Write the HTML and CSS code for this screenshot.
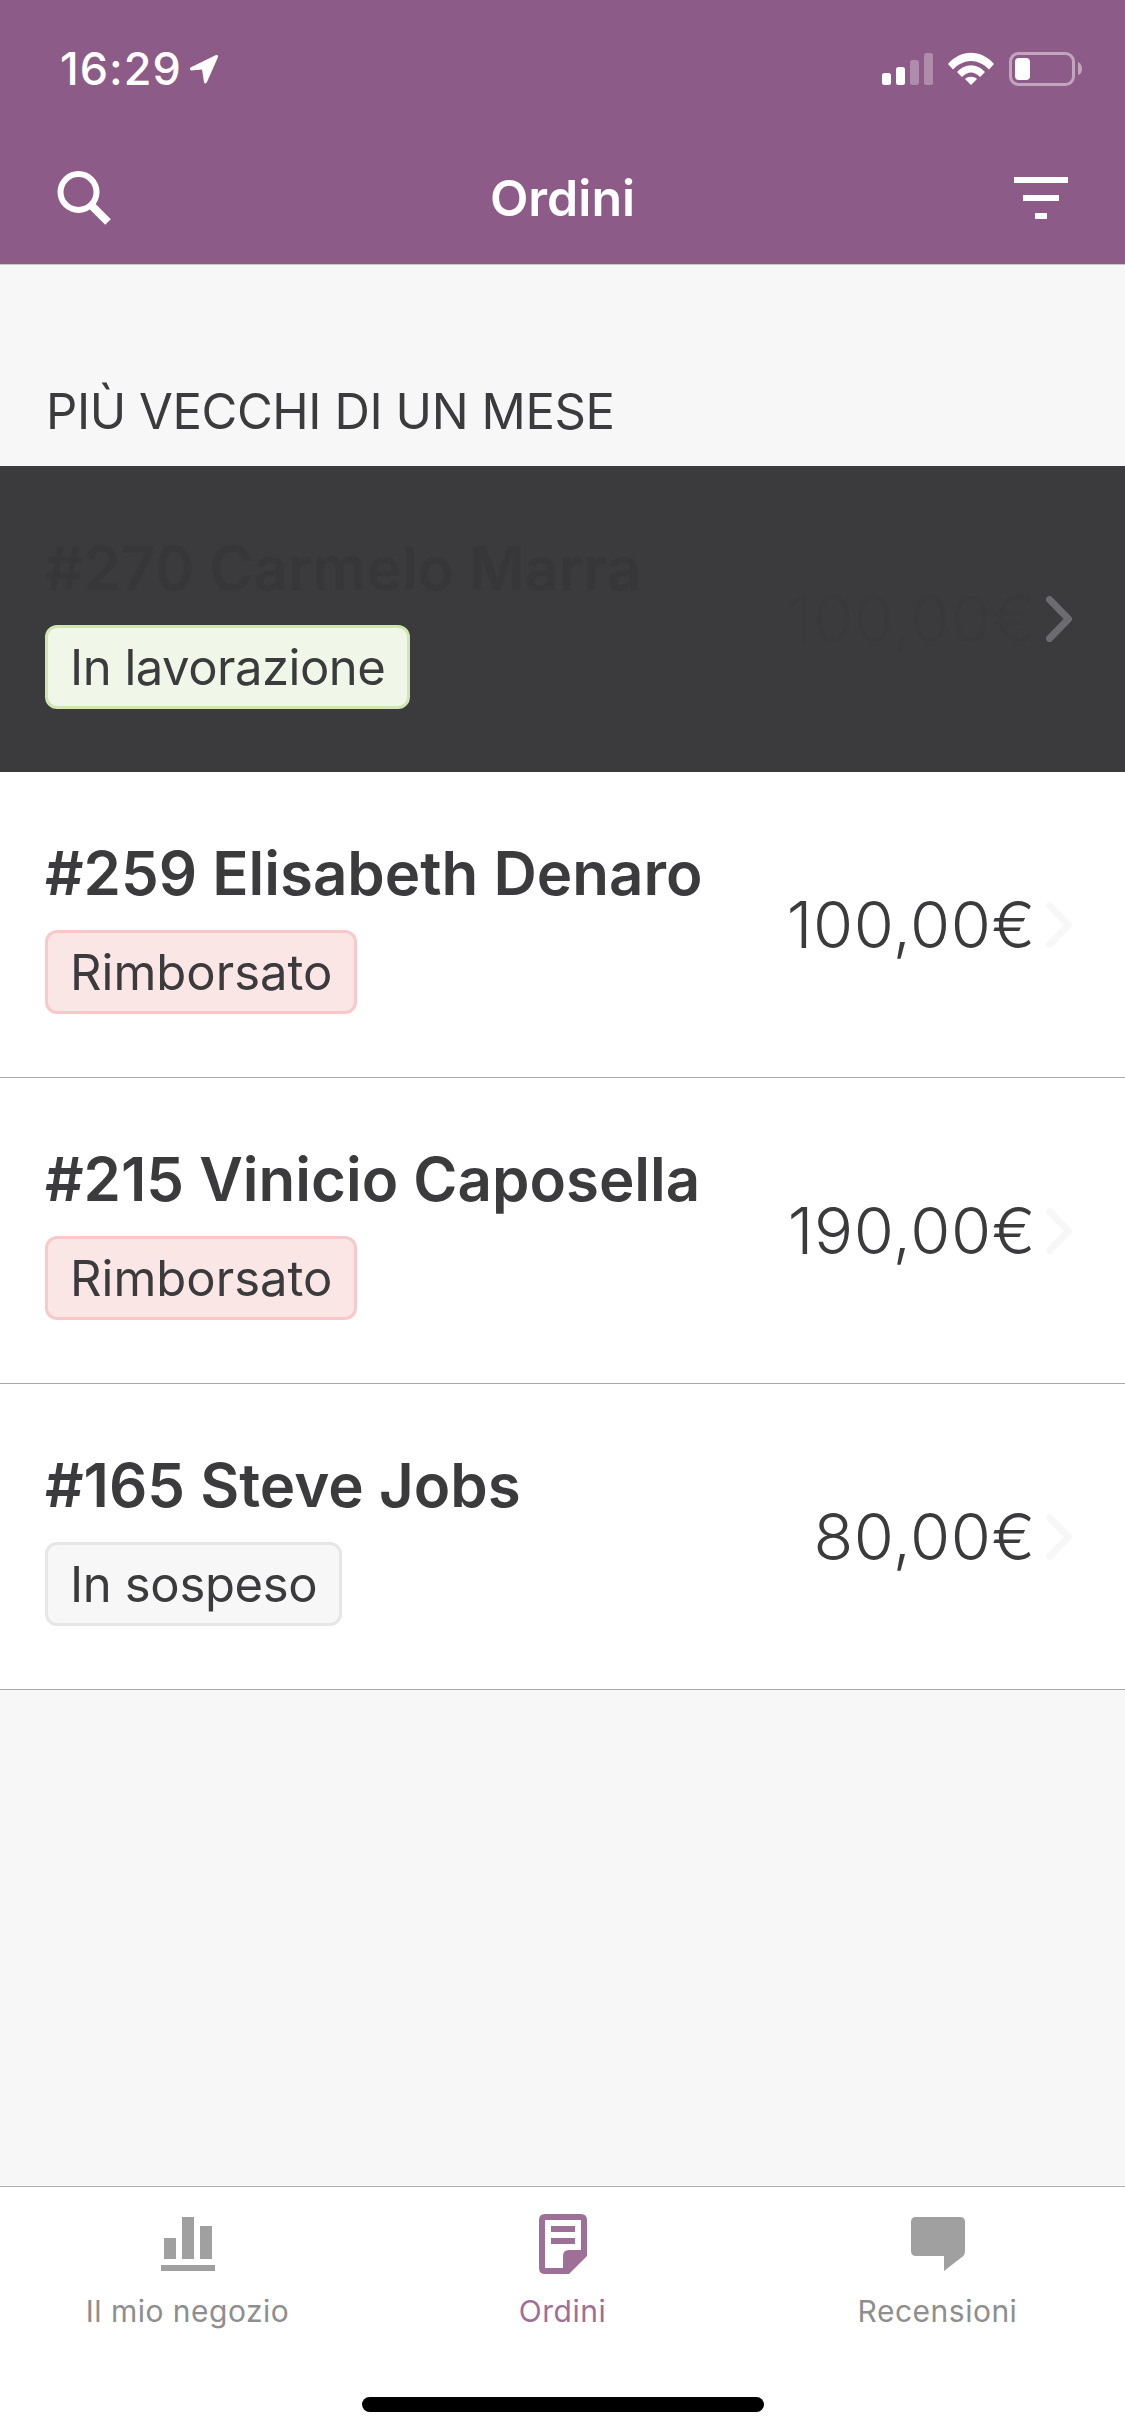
FILE: index.html

```html
<!DOCTYPE html>
<html lang="it">
<head>
    <meta charset="UTF-8">
    <meta name="viewport" content="width=device-width, initial-scale=1.0">
    <title>Ordini</title>
    <link rel="stylesheet" href="styles.css">
</head>
<body>

<div class="app">
    <header class="top">
        <div class="status-bar">
            <div class="status-left">
                <span class="time">16:29</span>
                <svg class="location" width="30" height="30" viewBox="0 0 30 30">
                    <path d="M1.5 13.5 L27 1 Q29.5 0.5 29 3 L18 28 Q16 31 15 28 L13 15.5 L2 16.5 Q0 15 1.5 13.5 Z" fill="#fff"/>
                </svg>
            </div>
            <div class="status-right">
                <svg class="signal" width="51" height="32" viewBox="0 0 51 32">
                    <rect x="0" y="20" width="9" height="12" rx="2.5" fill="#fff"/>
                    <rect x="14" y="14" width="9" height="18" rx="2.5" fill="#fff"/>
                    <rect x="28" y="7" width="9" height="25" rx="2.5" fill="#fff" opacity="0.3"/>
                    <rect x="42" y="0" width="9" height="32" rx="2.5" fill="#fff" opacity="0.3"/>
                </svg>
                <svg class="wifi" width="46" height="33" viewBox="0 0 46 33">
                    <path d="M0 12 C13 -3 33 -3 46 12 L41 17.5 C30 6 16 6 5 17.5 Z" fill="#fff"/>
                    <path d="M9 21 C17 12 29 12 37 21 L32 26 C26 20 20 20 14 26 Z" fill="#fff" transform="translate(0 -1)"/>
                    <path d="M17 27 C20 24 26 24 29 27 L23 33 Z" fill="#fff"/>
                </svg>
                <svg class="battery" width="73" height="34" viewBox="0 0 73 34">
                    <rect x="1.5" y="1.5" width="63" height="31" rx="8" fill="none" stroke="#fff" stroke-opacity="0.45" stroke-width="3"/>
                    <rect x="6" y="6" width="15" height="22" rx="4" fill="#fff"/>
                    <path d="M69 10 Q73 12 73 17 Q73 22 69 23 Z" fill="#fff" fill-opacity="0.45"/>
                </svg>
            </div>
        </div>
        <nav class="nav-bar">
            <svg class="search-icon" width="54" height="54" viewBox="0 0 54 54">
                <circle cx="21.5" cy="21" r="18" fill="none" stroke="#fff" stroke-width="6"/>
                <path d="M34 34 L51 51" stroke="#fff" stroke-width="8" fill="none"/>
            </svg>
            <h1 class="nav-title">Ordini</h1>
            <svg class="filter-icon" width="54" height="42" viewBox="0 0 54 42">
                <rect x="0" y="0" width="54" height="6" fill="#fff"/>
                <rect x="9" y="18" width="36" height="6" fill="#fff"/>
                <rect x="21" y="36" width="12" height="6" fill="#fff"/>
            </svg>
        </nav>
    </header>

    <h2 class="section-label">PIÙ VECCHI DI UN MESE</h2>

    <ul class="orders">
        <li class="order order-pressed">
            <div class="order-main">
                <div class="order-name">#270 Carmelo Marra</div>
                <span class="badge badge-green">In lavorazione</span>
            </div>
            <div class="order-price">100,00€</div>
            <svg class="chevron" width="26" height="46" viewBox="0 0 26 46"><path d="M3.5 3.5 L22.5 23 L3.5 42.5" fill="none" stroke="currentColor" stroke-width="7" stroke-linecap="round" stroke-linejoin="round"/></svg>
        </li>
        <li class="order">
            <div class="order-main">
                <div class="order-name">#259 Elisabeth Denaro</div>
                <span class="badge badge-red">Rimborsato</span>
            </div>
            <div class="order-price">100,00€</div>
            <svg class="chevron" width="26" height="46" viewBox="0 0 26 46"><path d="M3.5 3.5 L22.5 23 L3.5 42.5" fill="none" stroke="currentColor" stroke-width="7" stroke-linecap="round" stroke-linejoin="round"/></svg>
        </li>
        <li class="order">
            <div class="order-main">
                <div class="order-name">#215 Vinicio Caposella</div>
                <span class="badge badge-red">Rimborsato</span>
            </div>
            <div class="order-price">190,00€</div>
            <svg class="chevron" width="26" height="46" viewBox="0 0 26 46"><path d="M3.5 3.5 L22.5 23 L3.5 42.5" fill="none" stroke="currentColor" stroke-width="7" stroke-linecap="round" stroke-linejoin="round"/></svg>
        </li>
        <li class="order">
            <div class="order-main">
                <div class="order-name">#165 Steve Jobs</div>
                <span class="badge badge-grey">In sospeso</span>
            </div>
            <div class="order-price">80,00€</div>
            <svg class="chevron" width="26" height="46" viewBox="0 0 26 46"><path d="M3.5 3.5 L22.5 23 L3.5 42.5" fill="none" stroke="currentColor" stroke-width="7" stroke-linecap="round" stroke-linejoin="round"/></svg>
        </li>
    </ul>

    <footer class="tab-bar">
        <div class="tabs">
            <div class="tab">
                <svg class="tab-icon" width="54" height="60" viewBox="0 0 54 60">
                    <rect x="3" y="24" width="12" height="21" fill="#a0a0a0"/>
                    <rect x="21" y="3" width="12" height="42" fill="#a0a0a0"/>
                    <rect x="39" y="12" width="12" height="33" fill="#a0a0a0"/>
                    <rect x="0" y="51" width="54" height="6" fill="#a0a0a0"/>
                </svg>
                <span class="tab-label">Il mio negozio</span>
            </div>
            <div class="tab tab-active">
                <svg class="tab-icon" width="48" height="60" viewBox="0 0 48 60">
                    <path fill-rule="evenodd" d="M6 0 H42 Q48 0 48 6 V42 L30 60 H6 Q0 60 0 54 V6 Q0 0 6 0 Z M6 6 V54 H24 V42 Q24 36 30 36 H42 V6 Z" fill="#9e6f97"/>
                    <rect x="12" y="12" width="24" height="6" fill="#9e6f97"/>
                    <rect x="12" y="24" width="24" height="6" fill="#9e6f97"/>
                </svg>
                <span class="tab-label">Ordini</span>
            </div>
            <div class="tab">
                <svg class="tab-icon" width="54" height="60" viewBox="0 0 54 60">
                    <path d="M5 3 H49 Q54 3 54 8 V37 Q54 41 51 43 L33 57 V42 H5 Q0 42 0 37 V8 Q0 3 5 3 Z" fill="#a0a0a0"/>
                </svg>
                <span class="tab-label">Recensioni</span>
            </div>
        </div>
        <div class="home-indicator"></div>
    </footer>
</div>

</body>
</html>
```

FILE: styles.css

```css
* {
    box-sizing: border-box;
}
body {
    margin: 0;
    font-family: 'Inter', 'Liberation Sans', sans-serif;
    background-color: #f7f7f7;
    color: #3b3b3d;
}
.app {
    width: 1125px;
    height: 2436px;
    display: flex;
    flex-direction: column;
    overflow: hidden;
}

/* top bar */
.top {
    height: 265px;
    background-color: #8d5b87;
    border-bottom: 1px solid #c9c9c9;
    color: #ffffff;
}
.status-bar {
    height: 132px;
    display: flex;
    justify-content: space-between;
    padding: 52px 43px 0 60px;
}
.status-left {
    display: flex;
    align-items: flex-start;
    gap: 7px;
}
.time {
    font-size: 45px;
    font-weight: 500;
    line-height: 34px;
    letter-spacing: 1px;
}
.location {
    margin-top: 2px;
}
.status-right {
    display: flex;
    align-items: flex-start;
    gap: 15px;
}
.signal {
    margin-top: 1px;
}
.nav-bar {
    display: flex;
    justify-content: space-between;
    align-items: center;
    height: 132px;
    padding: 0 57px;
}
.nav-title {
    margin: 0;
    font-size: 50px;
    font-weight: 600;
    color: #ffffff;
}

/* list */
.section-label {
    margin: 0;
    height: 201px;
    padding: 117px 0 0 46px;
    font-size: 49px;
    font-weight: 400;
    line-height: 60px;
    letter-spacing: -0.4px;
    color: #3b3b3d;
}
.orders {
    list-style: none;
    margin: 0;
    padding: 0;
}
.order {
    display: flex;
    align-items: center;
    height: 306px;
    padding: 0 53px 0 45px;
    background-color: #ffffff;
    border-bottom: 1px solid #a8a8a8;
    color: #f7f7f9;
}
.order-pressed {
    background-color: #3b3b3d;
    border-bottom: none;
    color: #6c6c70;
}
.order-main {
    flex: 1;
    display: flex;
    flex-direction: column;
    align-items: flex-start;
    gap: 22px;
    padding-top: 3px;
}
.order-name {
    font-size: 60px;
    font-weight: 600;
    line-height: 70px;
    color: #3b3b3d;
}
.order-price {
    font-size: 65px;
    font-weight: 350;
    line-height: 70px;
    letter-spacing: 0.6px;
    margin-right: 10px;
    color: #3b3b3d;
}
.order-pressed .order-name {
    color: #37373a;
}
.order-pressed .order-price {
    color: #39393b;
}
.badge {
    display: block;
    height: 84px;
    padding: 0 22px;
    border: 3px solid;
    border-radius: 12px;
    font-size: 49px;
    line-height: 80px;
    color: #3b3b3d;
}
.badge-green {
    background-color: #f0f7e8;
    border-color: #cfe6b0;
    letter-spacing: -0.5px;
}
.badge-red {
    background-color: #fbe6e6;
    border-color: #f9c9c9;
}
.badge-grey {
    background-color: #f7f7f7;
    border-color: #e6e6e6;
    letter-spacing: -0.35px;
}

/* bottom tabs */
.tab-bar {
    margin-top: auto;
    height: 250px;
    background-color: #ffffff;
    border-top: 1px solid #b0b0b0;
}
.tabs {
    display: flex;
    height: 210px;
    padding-top: 27px;
}
.tab {
    flex: 1;
    display: flex;
    flex-direction: column;
    align-items: center;
    color: #8e8e8e;
}
.tab-active {
    color: #9e6f97;
}
.tab-icon {
    display: block;
}
.tab-label {
    margin-top: 19px;
    font-size: 30px;
    font-weight: 400;
    line-height: 36px;
    letter-spacing: 0.5px;
}
.home-indicator {
    width: 402px;
    height: 15px;
    margin: 0 auto;
    background-color: #000000;
    border-radius: 8px;
}
```
